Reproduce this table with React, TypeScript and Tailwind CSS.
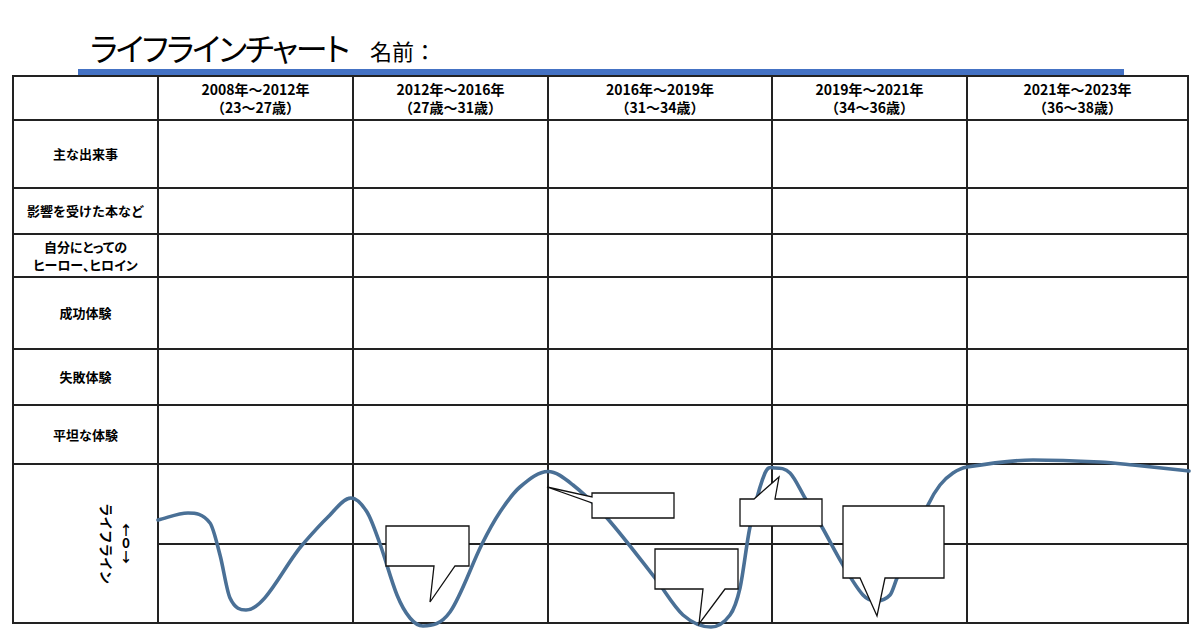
import React from "react";

type P = [number, number];

const curvePts: P[] = [
  [158, 520], [188, 513], [210, 523], [220, 555], [230, 598], [246, 610],
  [303, 544], [327, 518], [351, 498], [367, 512], [380, 544], [397, 595],
  [410, 618], [423, 626], [450, 612], [482, 544], [500, 512], [520, 487],
  [548, 471.5], [573, 485], [607, 518], [655, 578], [683, 615], [711, 627],
  [730, 615], [740, 588], [750, 527], [765, 473], [775, 468], [790, 473],
  [805, 498], [822, 527], [843, 565], [863, 595], [876, 601], [890, 595],
  [897, 578], [928, 505], [940, 485], [953, 473], [967, 467], [1033, 460],
  [1100, 462], [1133, 465], [1189, 471],
];

function smoothPath(p: P[]): string {
  const n = p.length;
  const t: number[] = new Array(n).fill(0);
  for (let i = 1; i < n - 1; i++) {
    const s0 = (p[i][1] - p[i - 1][1]) / (p[i][0] - p[i - 1][0]);
    const s1 = (p[i + 1][1] - p[i][1]) / (p[i + 1][0] - p[i][0]);
    if (s0 * s1 <= 0) t[i] = 0;
    else t[i] = (p[i + 1][1] - p[i - 1][1]) / (p[i + 1][0] - p[i - 1][0]);
  }
  t[0] = (p[1][1] - p[0][1]) / (p[1][0] - p[0][0]);
  t[n - 1] = (p[n - 1][1] - p[n - 2][1]) / (p[n - 1][0] - p[n - 2][0]);
  let d = `M${p[0][0]},${p[0][1]}`;
  for (let i = 0; i < n - 1; i++) {
    const [x0, y0] = p[i];
    const [x1, y1] = p[i + 1];
    const h = (x1 - x0) / 3;
    d += ` C${(x0 + h).toFixed(2)},${(y0 + h * t[i]).toFixed(2)} ${(x1 - h).toFixed(2)},${(y1 - h * t[i + 1]).toFixed(2)} ${x1},${y1}`;
  }
  return d;
}

const curveD = smoothPath(curvePts);

const callouts = [
  "M386,526 H469 V566 H455 L430,602 L434,566 H386 Z",
  "M592,493 H674 V518 H592 V503 L547,487 L592,497 Z",
  "M655,549 H738 V589 H725 L699,624 L703,589 H655 Z",
  "M740,499 H754 L779,477 L775,499 H822 V526 H740 Z",
  "M843,506 H944 V578 H885 L877,616 L860,578 H843 Z",
];

const headers: [string, string][] = [
  ["2008年～2012年", "（23～27歳）"],
  ["2012年～2016年", "（27歳～31歳）"],
  ["2016年～2019年", "（31～34歳）"],
  ["2019年～2021年", "（34～36歳）"],
  ["2021年～2023年", "（36～38歳）"],
];

const rowLabels: { lines: string[]; palt: boolean }[] = [
  { lines: ["主な出来事"], palt: false },
  { lines: ["影響を受けた本など"], palt: false },
  { lines: ["自分にとっての", "ヒーロー、ヒロイン"], palt: true },
  { lines: ["成功体験"], palt: false },
  { lines: ["失敗体験"], palt: false },
  { lines: ["平坦な体験"], palt: false },
];

const font = { fontFamily: '"Noto Sans CJK JP", "Noto Sans", sans-serif' };

export default function App() {
  return (
    <div
      className="relative w-[1200px] h-[643px] bg-white overflow-hidden text-black"
      style={font}
    >
      {/* Title */}
      <div className="flex items-end pl-[90px] pt-[30px] h-[69px]">
        <div className="text-[32px] leading-[32px] font-normal [font-feature-settings:'palt'] tracking-[-2px] mb-[6px]">
          ライフラインチャート
        </div>
        <div className="text-[22px] leading-[22px] font-normal ml-[22px] mb-[8px]">
          名前：
        </div>
      </div>
      <div className="ml-[78px] w-[1046px] h-[6px] bg-[#4472c4]" />

      {/* Table */}
      <div className="ml-[12px] w-[1177px] grid grid-cols-[143px_193px_193px_222px_193px_219px] grid-rows-[42px_66px_44px_41px_70px_54px_57px_157px] gap-[2px] p-[2px] bg-[#222]">
        <div className="bg-white" />
        {headers.map(([a, b], i) => (
          <div key={i} className="bg-white flex flex-col items-center justify-center">
            <p className="text-center text-[14px] leading-[18px] font-bold">{a}</p>
            <p className="text-center text-[14px] leading-[18px] font-bold">{b}</p>
          </div>
        ))}
        {rowLabels.map((row, r) => (
          <React.Fragment key={r}>
            <div className="bg-white flex items-center justify-center">
              <p
                className={
                  row.palt
                    ? "text-center text-[13px] leading-[18px] font-bold [font-feature-settings:'palt']"
                    : "text-center text-[13px] leading-[18px] font-bold"
                }
              >
                {row.lines.map((l, k) => (
                  <React.Fragment key={k}>
                    {k > 0 && <br />}
                    {l}
                  </React.Fragment>
                ))}
              </p>
            </div>
            {[0, 1, 2, 3, 4].map((c) => (
              <div key={c} className="bg-white" />
            ))}
          </React.Fragment>
        ))}
        <div className="bg-white flex items-center pl-[86px] gap-[5px]">
          <div className="[writing-mode:vertical-rl] [text-orientation:sideways] text-[13.5px] leading-[14px] font-semibold">
            ライフライン
          </div>
          <div className="[writing-mode:vertical-rl] [text-orientation:upright] text-[13.5px] leading-[13px] font-bold">
            ↑0↓
          </div>
        </div>
        {[0, 1, 2, 3, 4].map((c) => (
          <div key={c} className="bg-white flex flex-col">
            <div className="h-[80px] border-b-2 border-[#222]" />
          </div>
        ))}
      </div>

      {/* Curve & callouts overlay */}
      <svg
        className="absolute left-0 top-0 pointer-events-none"
        width={1200}
        height={643}
        viewBox="0 0 1200 643"
      >
        <path
          d={curveD}
          fill="none"
          stroke="#4a7096"
          strokeWidth={3.6}
          strokeLinecap="round"
          strokeLinejoin="round"
        />
        {callouts.map((d, i) => (
          <path key={i} d={d} fill="#fff" stroke="#111" strokeWidth={1.3} strokeLinejoin="miter" />
        ))}
      </svg>
    </div>
  );
}
